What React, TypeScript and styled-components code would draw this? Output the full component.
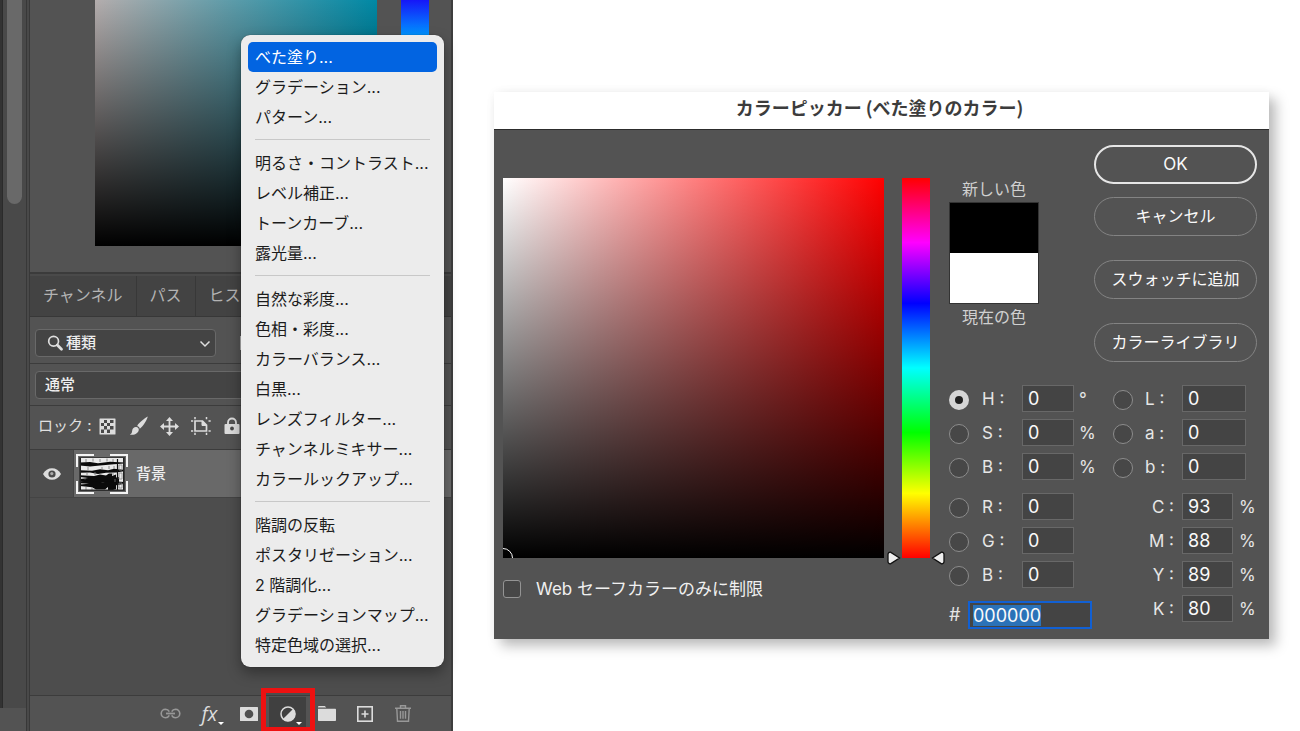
import React, { useEffect, useRef } from 'react';
import styled, { createGlobalStyle, css } from 'styled-components';

const GlobalStyle = createGlobalStyle`
  *, *::before, *::after { box-sizing: border-box; }
  body {
    margin: 0;
    background: #fff;
    font-family: Inter, 'Noto Sans CJK JP', sans-serif;
    font-size: 16px;
    line-height: 24px;
  }
  button, input, select { font: inherit; color: inherit; margin: 0; }
  svg { display: block; }
`;

const Page = styled.div`
  display: flex;
  align-items: stretch;
  min-height: 100vh;
`;

/* ---------- Left: application panel ---------- */

const Workspace = styled.aside`
  position: relative;
  flex: 0 0 453px;
  display: flex;
  background: #4d4d4d;
  color: #e0e0e0;
`;

const ScrollRail = styled.div`
  flex: 0 0 30px;
  display: flex;
  flex-direction: column;
  align-items: flex-start;
  padding-left: 7px;
  background: linear-gradient(to right, #333 0 2px, #2b2b2b 2px 3px, #494949 3px 26px, #383838 26px 27px, #494949 27px 29px, #383838 29px);
`;

const ScrollThumb = styled.div`
  width: 15px;
  height: 204px;
  border-radius: 0 0 8px 8px;
  background: #696969;
`;

const RailFoot = styled.div`
  align-self: stretch;
  height: 23px;
  margin: auto 4px 0 -7px;
  background: #535353;
`;

const Panels = styled.div`
  flex: 1;
  display: flex;
  flex-direction: column;
  border-right: 2px solid #3d3d3d;
`;

const ColorPanel = styled.div`
  display: flex;
  gap: 24px;
  height: 276px;
  padding-left: 65px;
  background: linear-gradient(#535353 272px, #3b3b3b 272px 274px, #4a4a4a 274px);
`;

const TealField = styled.div`
  width: 282px;
  height: 246px;
  background:
    linear-gradient(to bottom, transparent, #000),
    linear-gradient(to right, #b4adad, #0089a5);
`;

const BlueHue = styled.div`
  width: 28px;
  height: 246px;
  background: linear-gradient(#1616f8, #0090ff 34px, #0cf 70px, #0f0 160px, #ff0);
`;

const Tabs = styled.div`
  display: flex;
  height: 41px;
  background: #434343;
  border-bottom: 1px solid #383838;
`;

const Tab = styled.button`
  border: 0;
  border-right: 1px solid #383838;
  padding: 0 13px 2px;
  background: none;
  color: #b4b4b4;
  white-space: nowrap;
`;

const PanelRow = styled.div<{ $height: number }>`
  display: flex;
  align-items: flex-end;
  height: ${(p) => p.$height}px;
  padding: 0 5px 6px;
  background: #535353;
  border-bottom: 1px solid #3c3c3c;
`;

const SelectBox = styled.label<{ $wide?: boolean }>`
  position: relative;
  display: block;
  width: ${(p) => (p.$wide ? '320px' : '181px')};
`;

const Select = styled.select<{ $indent: number }>`
  appearance: none;
  display: block;
  width: 100%;
  height: 28px;
  padding: 0 30px 0 ${(p) => p.$indent}px;
  border: 1px solid #696969;
  border-radius: 4px;
  background: #444;
  color: #eee;
  font-size: 15px;
  font-weight: 500;
  line-height: 20px;
`;

const SelectIcon = styled.span<{ $side: 'left' | 'right' }>`
  position: absolute;
  top: 6px;
  ${(p) => p.$side}: ${(p) => (p.$side === 'left' ? 12 : 5)}px;
  pointer-events: none;
`;

const LockLabel = styled.span`
  flex: 0 0 57px;
  padding-left: 3px;
  font-size: 15px;
  line-height: 34px;
  white-space: nowrap;
`;

const IconButton = styled.button<{ $width: number }>`
  position: relative;
  display: flex;
  flex: 0 0 ${(p) => p.$width}px;
  justify-content: center;
  align-items: center;
  height: 34px;
  padding: 0;
  border: 0;
  background: none;
  color: #dcdcdc;
`;

const FilterButton = styled(IconButton)`
  height: 28px;
  margin-left: 24px;
`;

const Layer = styled.div`
  display: flex;
  height: 48px;
  border-bottom: 1px solid #444;
`;

const EyeButton = styled.button`
  flex: 0 0 43px;
  display: grid;
  place-items: center;
  padding: 0;
  border: 0;
  background: #4d4d4d;
  color: #dcdcdc;
`;

const LayerBody = styled.div`
  flex: 1;
  display: flex;
  align-items: center;
  gap: 8px;
  padding-left: 2px;
  border-left: 1px solid #444;
  background: #696969;
  color: #eee;
  font-size: 15px;
  font-weight: 500;
`;

const Footer = styled.div`
  display: flex;
  align-items: center;
  height: 36px;
  margin-top: auto;
  padding-left: 121px;
  background: #535353;
  border-top: 1px solid #3c3c3c;
`;

const FooterButton = styled(IconButton)<{ $active?: boolean; $dim?: boolean }>`
  ${(p) => p.$dim && css`color: #989898;`}
  ${(p) =>
    p.$active &&
    css`
      background: linear-gradient(#404040, #404040) center / 37px 100% no-repeat;
      &::after {
        content: '';
        position: absolute;
        inset: -9px -8px -1px -7px;
        border: 5px solid #ee1111;
      }
    `}
`;

/* ---------- Pop-up menu ---------- */

const Menu = styled.div`
  position: absolute;
  top: 35px;
  left: 241px;
  width: 203px;
  padding: 7px;
  border-radius: 9px;
  background: #ececec;
  box-shadow: 0 0 1px rgba(0, 0, 0, 0.6), 0 6px 14px rgba(0, 0, 0, 0.35);
`;

const MenuItem = styled.button<{ $selected?: boolean }>`
  display: block;
  width: 100%;
  height: 30px;
  padding: 0 7px;
  border: 0;
  border-radius: 5px;
  background: ${(p) => (p.$selected ? '#0264e1' : 'none')};
  color: ${(p) => (p.$selected ? '#fff' : '#1c1c1c')};
  text-align: left;
  white-space: nowrap;
`;

const MenuRule = styled.hr`
  height: 1px;
  margin: 7px 7px 8px;
  border: 0;
  background: #c8c8c8;
`;

/* ---------- Right: colour picker dialog ---------- */

const Stage = styled.main`
  flex: 1;
  padding: 92px 31px 40px 41px;
`;

const Dialog = styled.section`
  box-shadow: 7px 7px 12px rgba(0, 0, 0, 0.26), 0 0 10px rgba(0, 0, 0, 0.04);
  background: #535353;
  color: #e6e6e6;
`;

const DialogTitle = styled.h1`
  margin: 0;
  padding: 3px 4px 10px 0;
  border-bottom: 1px solid #2c2c2c;
  background: #fff;
  color: #3c3c3c;
  font-family: 'Noto Sans CJK JP', sans-serif;
  font-size: 18px;
  font-weight: 700;
  line-height: 24px;
  text-align: center;
`;

const DialogBody = styled.form`
  display: flex;
  align-items: flex-start;
  padding: 15px 12px 10px 9px;
`;

const FieldColumn = styled.div`
  flex: 1;
  padding-top: 33px;
`;

const ColorField = styled.div`
  position: relative;
  height: 380px;
  overflow: hidden;
  background:
    linear-gradient(to bottom, transparent, #000),
    linear-gradient(to right, #fff, #f00);
`;

const FieldCursor = styled.span`
  position: absolute;
  left: -10px;
  bottom: -10px;
  width: 20px;
  height: 20px;
  border: 1px solid #fff;
  border-radius: 50%;
`;

const HueStrip = styled.div`
  position: relative;
  flex: 0 0 28px;
  height: 380px;
  margin: 33px 19px 0 18px;
  background: linear-gradient(#f00, #f0f 17%, #00f 33%, #0ff 50%, #0f0 67%, #ff0 83%, #f00);
`;

const HueHandle = styled.svg<{ $side: 'left' | 'right' }>`
  position: absolute;
  bottom: -7px;
  ${(p) => p.$side}: -15px;
`;

const CheckLine = styled.label`
  display: flex;
  align-items: center;
  gap: 15px;
  margin-top: 19px;
  color: #f0f0f0;
  font-size: 17px;
  white-space: nowrap;
`;

const CheckBox = styled.input`
  appearance: none;
  width: 18px;
  height: 18px;
  border: 1px solid #949494;
  border-radius: 3px;
  background: #474747;
`;

const Controls = styled.div`
  flex: 0 0 308px;
  display: flex;
  flex-direction: column;
  gap: 23px;
`;

const TopControls = styled.div`
  display: flex;
  justify-content: space-between;
`;

const SwatchColumn = styled.div`
  width: 90px;
  padding-top: 32px;
  text-align: center;
  color: #d0d0d0;
`;

const Swatches = styled.div`
  margin: 1px 0;
  border: 1px solid #333;
`;

const Swatch = styled.div<{ $color: string }>`
  height: 50px;
  background: ${(p) => p.$color};
`;

const PillButton = styled.button<{ $primary?: boolean }>`
  height: 39px;
  padding: 0 0 2px;
  border: ${(p) => (p.$primary ? '2px solid #e6e6e6' : '1px solid #838383')};
  border-radius: 20px;
  background: none;
  color: #fafafa;
  font-size: ${(p) => (p.$primary ? 17 : 16)}px;
  white-space: nowrap;
`;

const ButtonPair = styled.div`
  display: grid;
  row-gap: 13px;
`;

const ButtonStack = styled.div`
  display: flex;
  flex-direction: column;
  gap: 24px;
  width: 163px;
`;

const FieldGrid = styled.div`
  display: grid;
  grid-template-columns: 164px 1fr;
`;

const FieldGroup = styled.div`
  display: flex;
  flex-direction: column;
  gap: 7px;
`;

const FieldRow = styled.label<{ $columns: string }>`
  display: grid;
  grid-template-columns: ${(p) => p.$columns};
  align-items: center;
  height: 27px;
  white-space: nowrap;
`;

const GroupStack = styled.div`
  display: flex;
  flex-direction: column;
  gap: 13px;
`;

const Radio = styled.input`
  appearance: none;
  width: 20px;
  height: 20px;
  margin-top: 2px;
  border: 1px solid #8c8c8c;
  border-radius: 50%;
  background: #474747;
  &:checked {
    border: 6px solid #d6d6d6;
    background: #222;
  }
`;

const Caption = styled.span<{ $right?: boolean }>`
  font-size: 17px;
  ${(p) => p.$right && css`
    padding-right: 8px;
    text-align: right;
  `}
`;

const ValueInput = styled.input<{ $width: number }>`
  width: ${(p) => p.$width}px;
  height: 27px;
  padding: 0 0 0 5px;
  border: 1px solid #686868;
  background: #444;
  color: #fafafa;
  font-size: 18px;
`;

const HexRow = styled.label`
  display: flex;
  align-items: center;
  justify-content: space-between;
  width: 143px;
  font-size: 18px;
`;

const HexInput = styled.input`
  width: 124px;
  height: 28px;
  padding: 0 0 0 3px;
  border: 2px solid #1160d4;
  background: #444;
  color: #fafafa;
  font-size: 18px;
  outline: none;
  &::selection {
    background: #2b72b8;
    color: #fafafa;
  }
`;

const menuGroups = [
  ['べた塗り...', 'グラデーション...', 'パターン...'],
  ['明るさ・コントラスト...', 'レベル補正...', 'トーンカーブ...', '露光量...'],
  ['自然な彩度...', '色相・彩度...', 'カラーバランス...', '白黒...', 'レンズフィルター...', 'チャンネルミキサー...', 'カラールックアップ...'],
  ['階調の反転', 'ポスタリゼーション...', '2 階調化...', 'グラデーションマップ...', '特定色域の選択...'],
];

type Field = { label: string; value: string; unit?: string; checked?: boolean };

const hsb: Field[] = [
  { label: 'H', value: '0', unit: '°', checked: true },
  { label: 'S', value: '0', unit: '%' },
  { label: 'B', value: '0', unit: '%' },
];
const rgb: Field[] = [
  { label: 'R', value: '0' },
  { label: 'G', value: '0' },
  { label: 'B', value: '0' },
];
const lab: Field[] = [
  { label: 'L', value: '0' },
  { label: 'a', value: '0' },
  { label: 'b', value: '0' },
];
const cmyk: Field[] = [
  { label: 'C', value: '93', unit: '%' },
  { label: 'M', value: '88', unit: '%' },
  { label: 'Y', value: '89', unit: '%' },
  { label: 'K', value: '80', unit: '%' },
];

const RadioFields = ({ fields, columns, width }: { fields: Field[]; columns: string; width: number }) => (
  <FieldGroup>
    {fields.map((f) => (
      <FieldRow key={f.label} $columns={columns}>
        <Radio type="radio" name="channel" defaultChecked={f.checked} aria-label={f.label} />
        <Caption>{f.label} :</Caption>
        <ValueInput $width={width} defaultValue={f.value} aria-label={f.label} />
        {f.unit && <Caption>{f.unit}</Caption>}
      </FieldRow>
    ))}
  </FieldGroup>
);

const SearchIcon = () => (
  <svg width="17" height="17" viewBox="0 0 17 17" fill="none" stroke="#dedede">
    <circle cx="6.6" cy="6.3" r="4.9" strokeWidth="1.7" />
    <path d="M10.3 10.1l4.2 4.2" strokeWidth="2.8" strokeLinecap="round" />
  </svg>
);

const ChevronIcon = () => (
  <svg width="12" height="17" viewBox="0 0 12 17" fill="none" stroke="#dedede" strokeWidth="1.5">
    <path d="M1.5 6.5L6 11l4.5-4.5" />
  </svg>
);

const PixelFilterIcon = () => (
  <svg width="18" height="14" viewBox="0 0 18 14">
    <rect width="18" height="14" fill="#b8b8b8" />
    <path d="M2 12l4-6 3 4 2-2 4 4z" fill="#444" />
  </svg>
);

const CheckerIcon = () => (
  <svg width="17" height="17" viewBox="0 0 17 17">
    <rect x="0.5" y="0.5" width="16" height="16" rx="0.5" fill="currentColor" />
    <path d="M5 2h3v3H5zM11 2h3.5v3H11zM2 5h3v3H2zM8 5h3v3H8zM5 8h3v3.5H5zM11 8h3.5v3.5H11zM2 11.5h3V15H2zM8 11.5h3V15H8z" fill="#484848" />
  </svg>
);

const BrushIcon = () => (
  <svg width="20" height="20" viewBox="0 0 20 20" fill="currentColor">
    <path d="M18.8.6C15.3 2.3 10 6.9 8.2 9.9c1.5.5 2.3 1.4 2.6 2.8C13.8 10.6 17.9 4.6 18.8.6z" />
    <path d="M7.3 11c1.5.2 2.6 1.3 2.5 2.8-.2 3.4-4.4 5.8-8.9 4.8 2-.9 2-2.3 2.3-4.1.3-2.2 2-3.7 4.1-3.5z" />
  </svg>
);

const MoveIcon = () => (
  <svg width="19" height="19" viewBox="0 0 19 19" fill="currentColor">
    <path d="M9.5 0l3.5 4H6zM9.5 19l-3.5-4h7zM0 9.5L4 6v7zM19 9.5L15 13V6z" />
    <path d="M8.6 3h1.8v13H8.6zM3 8.6h13v1.8H3z" />
  </svg>
);

const ArtboardIcon = () => (
  <svg width="20" height="18" viewBox="0 0 20 18" fill="none" stroke="currentColor">
    <path d="M4 4h7.5l4 4v6H4z" strokeWidth="1.7" />
    <path d="M11 4v4.5h4.5z" fill="currentColor" strokeWidth="1" />
    <path d="M4 0v2.2M15.5 0v2.2M4 15.8V18M15.5 15.8V18M0 4h2.2M17.5 4h2.2M0 14h2.2M17.5 14h2.2" strokeWidth="1.5" />
  </svg>
);

const LockIcon = () => (
  <svg width="16" height="18" viewBox="0 0 16 18">
    <path d="M4 8V5.5a4 4 0 0 1 8 0V8" fill="none" stroke="currentColor" strokeWidth="1.8" />
    <rect x="0.5" y="7" width="15" height="10" rx="1" fill="currentColor" />
    <circle cx="8" cy="11.5" r="1.9" fill="#484848" />
  </svg>
);

const EyeIcon = () => (
  <svg width="18" height="12" viewBox="0 0 18 12">
    <path d="M0 6C2 2.2 5.3.2 9 .2S16 2.2 18 6c-2 3.8-5.3 5.8-9 5.8S2 9.8 0 6z" fill="currentColor" />
    <circle cx="9" cy="6" r="3.6" fill="#4a4a4a" />
    <circle cx="8.8" cy="5.6" r="1.6" fill="#aaa" />
  </svg>
);

const LayerThumbnail = () => (
  <svg width="52" height="40" viewBox="0 0 52 40">
    <path d="M1 13V1h17M34 1h17v12M51 27v12H34M18 39H1V27" fill="none" stroke="#f4f4f4" strokeWidth="2" />
    <rect x="3" y="3" width="46" height="34" fill="#3a3a3a" />
    <g transform="translate(4 4)">
      <rect width="44" height="32" fill="#eaeaea" />
      <path d="M0 4.6l10-.6 8 1.2 12-1.4 14 .6v1.2l-10 .6-14 1.2L10 8.400 0 7.600z" fill="#0a0a0a" />
      <path d="M0 12.200l12 .6 8-1.600 8 1 6-1.400 10 1v1.400l-8 1.200-10 .4-8 1.200-8-1.400-10 .2z" fill="#0a0a0a" />
      <path d="M0 17.200l14 .8 6-1.600 6 1 3-2h3v2.600l4-1.400v3l3-.6v5l-5 1-8-1-8 1.600-18-2.200v-2.400l8-1-8-1z" fill="#0a0a0a" />
      <path d="M0 23.400l10-.6 12 1.600 8-1.400 14 1v2l-8 1.200v4l-3 .8h-5v-3l-3 2.600h-9l-4-2.400-12-1.200v-1.400l9-.8-9-.6z" fill="#0a0a0a" />
      <path d="M6 1v3M13 .5v3M20 1v3M27 .5v3M33 1v3M8 9v3M22 9v3M29 8v3M34 8v3M7 14v3M15 14v3M33 14v3M5 19.500v2M6 29v3M12 29v3M35 21v3" stroke="#777" strokeWidth="0.8" />
      <path d="M37.500 1v31" stroke="#111" strokeWidth="1.2" />
      <path d="M39 7v5h3V7zM39 15v6h3v-6zM39 25v5h3v-5z" fill="none" stroke="#888" strokeWidth="0.8" />
      <path d="M.500 0v32h43V0" fill="none" stroke="#222" />
    </g>
  </svg>
);

const LinkIcon = () => (
  <svg width="21" height="11" viewBox="0 0 21 11" fill="none" stroke="currentColor" strokeWidth="1.6">
    <path d="M9.3 3.6A4.4 4.4 0 0 0 5.5 1.2a4.3 4.3 0 0 0 0 8.6 4.4 4.4 0 0 0 3.8-2.4" />
    <path d="M11.7 3.6a4.4 4.4 0 0 1 3.8-2.4 4.3 4.3 0 0 1 0 8.6 4.4 4.4 0 0 1-3.8-2.4" />
    <path d="M6 5.5h9" strokeWidth="1.8" />
  </svg>
);

const Caret = styled.span`
  position: absolute;
  right: 5px;
  bottom: 6px;
  border: 3px solid transparent;
  border-top-color: #fff;
  border-bottom: 0;
`;

const FxText = styled.span`
  font-family: 'Open Sans', 'Noto Sans', sans-serif;
  font-size: 20px;
  font-style: italic;
  line-height: 24px;
`;

const MaskIcon = () => (
  <svg width="18" height="14" viewBox="0 0 18 14">
    <rect width="18" height="14" rx="0.5" fill="currentColor" />
    <circle cx="9" cy="7" r="4.3" fill="#505050" />
  </svg>
);

const AdjustIcon = () => (
  <svg width="16" height="16" viewBox="0 0 16 16">
    <circle cx="8" cy="8" r="7" fill="none" stroke="currentColor" strokeWidth="1.5" />
    <path d="M13.3 2.7A7.5 7.5 0 0 1 2.7 13.3z" fill="currentColor" />
  </svg>
);

const FolderIcon = () => (
  <svg width="18" height="15" viewBox="0 0 18 15" fill="currentColor">
    <path d="M0 1.2C0 .5.5 0 1.2 0h5.6l1.5 1.6H0zM0 2.8h17c.6 0 1 .4 1 1V14c0 .6-.4 1-1 1H1c-.6 0-1-.4-1-1z" />
  </svg>
);

const PlusIcon = () => (
  <svg width="16" height="16" viewBox="0 0 16 16" fill="none" stroke="currentColor">
    <rect x="0.8" y="0.8" width="14.4" height="14.4" strokeWidth="1.6" />
    <path d="M8 4.5v7M4.5 8h7" strokeWidth="1.6" />
  </svg>
);

const TrashIcon = () => (
  <svg width="16" height="17" viewBox="0 0 16 17" fill="none" stroke="currentColor" strokeWidth="1.4">
    <path d="M0 3.2h16M5.5 3V.8h5V3M1.8 3.5l.7 12.7h11l.7-12.7M5.5 6v7.8M8 6v7.8M10.5 6v7.8" />
  </svg>
);

export default function App() {
  const hexRef = useRef<HTMLInputElement>(null);

  useEffect(() => {
    hexRef.current?.focus();
    hexRef.current?.select();
  }, []);

  return (
    <Page>
      <GlobalStyle />
      <Workspace>
        <ScrollRail>
          <ScrollThumb />
          <RailFoot />
        </ScrollRail>
        <Panels>
          <ColorPanel>
            <TealField />
            <BlueHue />
          </ColorPanel>
          <Tabs>
            <Tab>チャンネル</Tab>
            <Tab>パス</Tab>
            <Tab>ヒス</Tab>
          </Tabs>
          <PanelRow $height={47}>
            <SelectBox>
              <SelectIcon $side="left"><SearchIcon /></SelectIcon>
              <Select $indent={30} aria-label="種類"><option>種類</option></Select>
              <SelectIcon $side="right"><ChevronIcon /></SelectIcon>
            </SelectBox>
            <FilterButton $width={18} aria-label="ピクセルレイヤー"><PixelFilterIcon /></FilterButton>
          </PanelRow>
          <PanelRow $height={42}>
            <SelectBox $wide>
              <Select $indent={9} aria-label="通常"><option>通常</option></Select>
            </SelectBox>
          </PanelRow>
          <PanelRow $height={44}>
            <LockLabel>ロック :</LockLabel>
            <IconButton $width={31} aria-label="透明ピクセル"><CheckerIcon /></IconButton>
            <IconButton $width={31} aria-label="画像ピクセル"><BrushIcon /></IconButton>
            <IconButton $width={31} aria-label="位置"><MoveIcon /></IconButton>
            <IconButton $width={31} aria-label="アートボード"><ArtboardIcon /></IconButton>
            <IconButton $width={31} aria-label="すべて"><LockIcon /></IconButton>
          </PanelRow>
          <Layer>
            <EyeButton aria-label="表示"><EyeIcon /></EyeButton>
            <LayerBody>
              <LayerThumbnail />
              背景
            </LayerBody>
          </Layer>
          <Footer>
            <FooterButton $width={39} $dim aria-label="リンク"><LinkIcon /></FooterButton>
            <FooterButton $width={39} aria-label="レイヤースタイル"><FxText>fx</FxText><Caret /></FooterButton>
            <FooterButton $width={39} aria-label="マスク"><MaskIcon /></FooterButton>
            <FooterButton $width={39} $active aria-label="調整レイヤー"><AdjustIcon /><Caret /></FooterButton>
            <FooterButton $width={39} aria-label="グループ"><FolderIcon /></FooterButton>
            <FooterButton $width={38} aria-label="新規"><PlusIcon /></FooterButton>
            <FooterButton $width={38} $dim aria-label="削除"><TrashIcon /></FooterButton>
          </Footer>
        </Panels>
        <Menu role="menu">
          {menuGroups.map((items, g) => (
            <React.Fragment key={items[0]}>
              {g > 0 && <MenuRule />}
              {items.map((item, i) => (
                <MenuItem key={item} role="menuitem" $selected={g === 0 && i === 0}>
                  {item}
                </MenuItem>
              ))}
            </React.Fragment>
          ))}
        </Menu>
      </Workspace>

      <Stage>
        <Dialog>
          <DialogTitle>カラーピッカー (べた塗りのカラー)</DialogTitle>
          <DialogBody onSubmit={(e) => e.preventDefault()}>
            <FieldColumn>
              <ColorField><FieldCursor /></ColorField>
              <CheckLine>
                <CheckBox type="checkbox" />
                Web セーフカラーのみに制限
              </CheckLine>
            </FieldColumn>
            <HueStrip>
              <HueHandle $side="left" width="14" height="14" viewBox="0 0 14 14">
                <path d="M3.5 1.2C2 1 1 2 1 3.5v7C1 12 2 13 3.5 12.8L12.5 7z" fill="#eee" stroke="#111" strokeWidth="1.3" />
              </HueHandle>
              <HueHandle $side="right" width="14" height="14" viewBox="0 0 14 14">
                <path d="M10.5 1.2C12 1 13 2 13 3.5v7c0 1.5-1 2.5-2.5 2.3L1.5 7z" fill="#eee" stroke="#111" strokeWidth="1.3" />
              </HueHandle>
            </HueStrip>
            <Controls>
              <TopControls>
                <SwatchColumn>
                  新しい色
                  <Swatches>
                    <Swatch $color="#000" />
                    <Swatch $color="#fff" />
                  </Swatches>
                  現在の色
                </SwatchColumn>
                <ButtonStack>
                  <ButtonPair>
                    <PillButton type="submit" $primary>OK</PillButton>
                    <PillButton type="button">キャンセル</PillButton>
                  </ButtonPair>
                  <PillButton type="button">スウォッチに追加</PillButton>
                  <PillButton type="button">カラーライブラリ</PillButton>
                </ButtonStack>
              </TopControls>
              <FieldGrid>
                <GroupStack>
                  <RadioFields fields={hsb} columns="33px 40px 57px 1fr" width={52} />
                  <RadioFields fields={rgb} columns="33px 40px 57px 1fr" width={52} />
                  <HexRow>
                    #
                    <HexInput ref={hexRef} defaultValue="000000" />
                  </HexRow>
                </GroupStack>
                <GroupStack>
                  <RadioFields fields={lab} columns="32px 37px 1fr" width={64} />
                  <FieldGroup>
                    {cmyk.map((f) => (
                      <FieldRow key={f.label} $columns="69px 57px 1fr">
                        <Caption $right>{f.label} :</Caption>
                        <ValueInput $width={51} defaultValue={f.value} />
                        <Caption>{f.unit}</Caption>
                      </FieldRow>
                    ))}
                  </FieldGroup>
                </GroupStack>
              </FieldGrid>
            </Controls>
          </DialogBody>
        </Dialog>
      </Stage>
    </Page>
  );
}
